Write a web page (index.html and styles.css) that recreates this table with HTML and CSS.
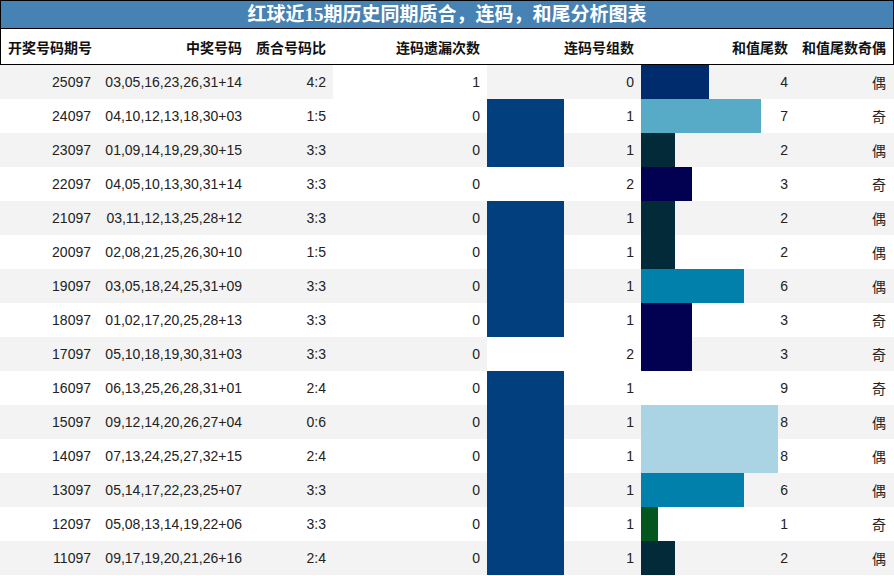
FILE: index.html
```html
<!DOCTYPE html>
<html lang="zh">
<head>
<meta charset="utf-8">
<title>红球近15期历史同期质合，连码，和尾分析图表</title>
<link rel="stylesheet" href="styles.css">
</head>
<body>
<div class="sheet">
  <div class="head-block">
    <div class="title">红球近15期历史同期质合，连码，和尾分析图表</div>
    <div class="row header">
      <div class="cell left">开奖号码期号</div>
      <div class="cell">中奖号码</div>
      <div class="cell">质合号码比</div>
      <div class="cell">连码遗漏次数</div>
      <div class="cell">连码号组数</div>
      <div class="cell">和值尾数</div>
      <div class="cell">和值尾数奇偶</div>
    </div>
  </div>
  <div class="body">
    <div class="row alt">
      <div class="cell">25097</div><div class="cell">03,05,16,23,26,31+14</div><div class="cell">4:2</div>
      <div class="cell bar-cell"><span class="bar" style="width:154px;background:#ffffff"></span><span class="val">1</span></div>
      <div class="cell bar-cell"><span class="val">0</span></div>
      <div class="cell bar-cell"><span class="bar" style="width:68px;background:#002b6c"></span><span class="val">4</span></div>
      <div class="cell">偶</div>
    </div>
    <div class="row">
      <div class="cell">24097</div><div class="cell">04,10,12,13,18,30+03</div><div class="cell">1:5</div>
      <div class="cell bar-cell"><span class="val">0</span></div>
      <div class="cell bar-cell"><span class="bar" style="width:77px;background:#013f7e"></span><span class="val">1</span></div>
      <div class="cell bar-cell"><span class="bar" style="width:120px;background:#58abc7"></span><span class="val">7</span></div>
      <div class="cell">奇</div>
    </div>
    <div class="row alt">
      <div class="cell">23097</div><div class="cell">01,09,14,19,29,30+15</div><div class="cell">3:3</div>
      <div class="cell bar-cell"><span class="val">0</span></div>
      <div class="cell bar-cell"><span class="bar" style="width:77px;background:#013f7e"></span><span class="val">1</span></div>
      <div class="cell bar-cell"><span class="bar" style="width:34px;background:#022a39"></span><span class="val">2</span></div>
      <div class="cell">偶</div>
    </div>
    <div class="row">
      <div class="cell">22097</div><div class="cell">04,05,10,13,30,31+14</div><div class="cell">3:3</div>
      <div class="cell bar-cell"><span class="val">0</span></div>
      <div class="cell bar-cell"><span class="bar" style="width:154px;background:#ffffff"></span><span class="val">2</span></div>
      <div class="cell bar-cell"><span class="bar" style="width:51px;background:#020050"></span><span class="val">3</span></div>
      <div class="cell">奇</div>
    </div>
    <div class="row alt">
      <div class="cell">21097</div><div class="cell">03,11,12,13,25,28+12</div><div class="cell">3:3</div>
      <div class="cell bar-cell"><span class="val">0</span></div>
      <div class="cell bar-cell"><span class="bar" style="width:77px;background:#013f7e"></span><span class="val">1</span></div>
      <div class="cell bar-cell"><span class="bar" style="width:34px;background:#022a39"></span><span class="val">2</span></div>
      <div class="cell">偶</div>
    </div>
    <div class="row">
      <div class="cell">20097</div><div class="cell">02,08,21,25,26,30+10</div><div class="cell">1:5</div>
      <div class="cell bar-cell"><span class="val">0</span></div>
      <div class="cell bar-cell"><span class="bar" style="width:77px;background:#013f7e"></span><span class="val">1</span></div>
      <div class="cell bar-cell"><span class="bar" style="width:34px;background:#022a39"></span><span class="val">2</span></div>
      <div class="cell">偶</div>
    </div>
    <div class="row alt">
      <div class="cell">19097</div><div class="cell">03,05,18,24,25,31+09</div><div class="cell">3:3</div>
      <div class="cell bar-cell"><span class="val">0</span></div>
      <div class="cell bar-cell"><span class="bar" style="width:77px;background:#013f7e"></span><span class="val">1</span></div>
      <div class="cell bar-cell"><span class="bar" style="width:103px;background:#0080aa"></span><span class="val">6</span></div>
      <div class="cell">偶</div>
    </div>
    <div class="row">
      <div class="cell">18097</div><div class="cell">01,02,17,20,25,28+13</div><div class="cell">3:3</div>
      <div class="cell bar-cell"><span class="val">0</span></div>
      <div class="cell bar-cell"><span class="bar" style="width:77px;background:#013f7e"></span><span class="val">1</span></div>
      <div class="cell bar-cell"><span class="bar" style="width:51px;background:#020050"></span><span class="val">3</span></div>
      <div class="cell">奇</div>
    </div>
    <div class="row alt">
      <div class="cell">17097</div><div class="cell">05,10,18,19,30,31+03</div><div class="cell">3:3</div>
      <div class="cell bar-cell"><span class="val">0</span></div>
      <div class="cell bar-cell"><span class="bar" style="width:154px;background:#ffffff"></span><span class="val">2</span></div>
      <div class="cell bar-cell"><span class="bar" style="width:51px;background:#020050"></span><span class="val">3</span></div>
      <div class="cell">奇</div>
    </div>
    <div class="row">
      <div class="cell">16097</div><div class="cell">06,13,25,26,28,31+01</div><div class="cell">2:4</div>
      <div class="cell bar-cell"><span class="val">0</span></div>
      <div class="cell bar-cell"><span class="bar" style="width:77px;background:#013f7e"></span><span class="val">1</span></div>
      <div class="cell bar-cell"><span class="bar" style="width:153px;background:#ffffff"></span><span class="val">9</span></div>
      <div class="cell">奇</div>
    </div>
    <div class="row alt">
      <div class="cell">15097</div><div class="cell">09,12,14,20,26,27+04</div><div class="cell">0:6</div>
      <div class="cell bar-cell"><span class="val">0</span></div>
      <div class="cell bar-cell"><span class="bar" style="width:77px;background:#013f7e"></span><span class="val">1</span></div>
      <div class="cell bar-cell"><span class="bar" style="width:137px;background:#aad4e3"></span><span class="val">8</span></div>
      <div class="cell">偶</div>
    </div>
    <div class="row">
      <div class="cell">14097</div><div class="cell">07,13,24,25,27,32+15</div><div class="cell">2:4</div>
      <div class="cell bar-cell"><span class="val">0</span></div>
      <div class="cell bar-cell"><span class="bar" style="width:77px;background:#013f7e"></span><span class="val">1</span></div>
      <div class="cell bar-cell"><span class="bar" style="width:137px;background:#aad4e3"></span><span class="val">8</span></div>
      <div class="cell">偶</div>
    </div>
    <div class="row alt">
      <div class="cell">13097</div><div class="cell">05,14,17,22,23,25+07</div><div class="cell">3:3</div>
      <div class="cell bar-cell"><span class="val">0</span></div>
      <div class="cell bar-cell"><span class="bar" style="width:77px;background:#013f7e"></span><span class="val">1</span></div>
      <div class="cell bar-cell"><span class="bar" style="width:103px;background:#0080aa"></span><span class="val">6</span></div>
      <div class="cell">偶</div>
    </div>
    <div class="row">
      <div class="cell">12097</div><div class="cell">05,08,13,14,19,22+06</div><div class="cell">3:3</div>
      <div class="cell bar-cell"><span class="val">0</span></div>
      <div class="cell bar-cell"><span class="bar" style="width:77px;background:#013f7e"></span><span class="val">1</span></div>
      <div class="cell bar-cell"><span class="bar" style="width:17px;background:#04561f"></span><span class="val">1</span></div>
      <div class="cell">奇</div>
    </div>
    <div class="row alt">
      <div class="cell">11097</div><div class="cell">09,17,19,20,21,26+16</div><div class="cell">2:4</div>
      <div class="cell bar-cell"><span class="val">0</span></div>
      <div class="cell bar-cell"><span class="bar" style="width:77px;background:#013f7e"></span><span class="val">1</span></div>
      <div class="cell bar-cell"><span class="bar" style="width:34px;background:#022a39"></span><span class="val">2</span></div>
      <div class="cell">偶</div>
    </div>
  </div>
</div>
</body>
</html>
```
FILE: styles.css
```css
html, body {
  margin: 0;
  padding: 0;
  background: #ffffff;
}

.sheet {
  width: 894px;
  height: 576px;
  overflow: hidden;
  font-family: "Liberation Sans", "Noto Sans CJK SC", sans-serif;
  font-size: 14px;
  color: #222222;
}

.head-block {
  border: 1px solid #000000;
  border-bottom: none;
}

.title {
  height: 27px;
  background: #4682b4;
  border-bottom: 1px solid #000000;
  color: #ffffff;
  font-family: "Liberation Serif", "Noto Sans CJK SC", serif;
  font-weight: bold;
  font-size: 19px;
  line-height: 27px;
  text-align: center;
}

.row {
  display: grid;
  grid-template-columns: 97px 151px 84px 154px 154px 154px 98px;
  height: 34px;
}

.body .row {
  padding-left: 1px;
}

.row.header {
  height: 35px;
  border-bottom: 1px solid #000000;
  font-weight: bold;
  color: #111111;
}

.row.alt {
  background: #f3f3f3;
}

.cell {
  display: flex;
  align-items: center;
  justify-content: flex-end;
  padding: 0 7px;
  white-space: nowrap;
  min-width: 0;
}

.cell.left {
  justify-content: flex-start;
}

.cell.bar-cell {
  display: grid;
  grid-template-columns: 1fr;
  grid-template-rows: 1fr;
  grid-template-areas: "stack";
  justify-content: stretch;
  align-items: stretch;
  padding: 0;
}

.bar {
  grid-area: stack;
  justify-self: start;
  height: 100%;
}

.val {
  grid-area: stack;
  justify-self: end;
  align-self: center;
  padding-right: 7px;
}
```
